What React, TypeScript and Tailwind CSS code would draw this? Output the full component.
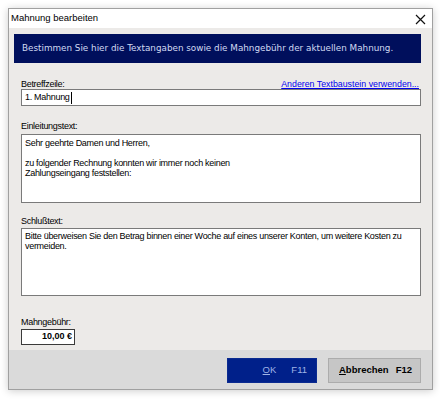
import React from "react";

const font = { fontFamily: '"Liberation Sans", Arial, sans-serif' };

function Label({ children }: { children: React.ReactNode }) {
  return <div className="h-[12px] text-[9px] leading-[12px] tracking-[-0.3px] text-black">{children}</div>;
}

export default function App() {
  return (
    <div className="w-[440px] h-[400px] bg-white pt-[8px] pl-[8px]" style={font}>
      <div className="w-[425px] h-[382px] flex flex-col border border-[#a0a0a0] shadow-[0_1px_8px_rgba(0,0,0,0.2)] bg-[#eceae8]">
        {/* title bar */}
        <div className="h-[19px] bg-white flex items-center justify-between pl-[2px] pr-[6px]">
          <span className="text-[9.5px] text-black">Mahnung bearbeiten</span>
          <svg width="11" height="11" viewBox="0 0 11 11" className="mt-[1px]">
            <path d="M1 1 L10 10 M10 1 L1 10" stroke="#111" strokeWidth="1.2" />
          </svg>
        </div>

        <div className="flex-1 flex flex-col pl-[5px]">
          {/* banner */}
          <div className="mt-[6px] w-[407px] h-[29px] bg-[#000f5c] flex items-center pl-[8px]">
            <span className="text-[#d2daf2]" style={{ fontFamily: '"DejaVu Sans", Verdana, sans-serif', fontSize: "8.8px" }}>
              Bestimmen Sie hier die Textangaben sowie die Mahngebühr der aktuellen Mahnung.
            </span>
          </div>

          <div className="pl-[7px] w-[407px] flex flex-col">
            {/* Betreffzeile */}
            <div className="mt-[15px] flex items-end justify-between w-[400px]">
              <Label>Betreffzeile:</Label>
              <a className="text-[8.8px] leading-[12px] text-[#0000ee] underline mr-[2px]">
                Anderen Textbaustein verwenden...
              </a>
            </div>
            <div className="mt-[-1px] w-[400px] h-[17px] bg-white border border-[#7a7a7a] flex items-center pl-[3px] text-[9px] tracking-[-0.3px]">
              1. Mahnung<span className="inline-block w-px h-[12px] bg-black ml-[1px]" />
            </div>

            {/* Einleitungstext */}
            <div className="mt-[14px]">
              <Label>Einleitungstext:</Label>
            </div>
            <div className="mt-[2px] w-[400px] h-[69px] bg-white border border-[#7a7a7a] px-[3px] pt-[3px] text-[9px] leading-[10px] tracking-[-0.3px]">
              <div>Sehr geehrte Damen und Herren,</div>
              <div className="h-[10px]" />
              <div>zu folgender Rechnung konnten wir immer noch keinen</div>
              <div>Zahlungseingang feststellen:</div>
            </div>

            {/* Schlußtext */}
            <div className="mt-[12px]">
              <Label>Schlußtext:</Label>
            </div>
            <div className="mt-[1px] w-[400px] h-[68px] bg-white border border-[#7a7a7a] px-[3px] pt-[2px] text-[9px] leading-[10px] tracking-[-0.3px]">
              <div className="whitespace-nowrap">Bitte überweisen Sie den Betrag binnen einer Woche auf eines unserer Konten, um weitere Kosten zu</div>
              <div>vermeiden.</div>
            </div>

            {/* Mahngebühr */}
            <div className="mt-[20px]">
              <Label>Mahngebühr:</Label>
            </div>
            <div className="mt-[1px] w-[54px] h-[16px] bg-white border border-[#3a3a3a] flex items-center justify-end pr-[2px] text-[9px] font-semibold">
              10,00 €
            </div>
          </div>
        </div>

        {/* footer */}
        <div className="h-[39px] bg-[#dadada] flex items-start justify-end gap-[11px] pt-[8px] pr-[11px]">
          <button className="w-[90px] h-[25px] bg-[#00208a] border border-[#0a2a90] flex items-center justify-end pr-[9px] gap-[15px] text-[9.5px] text-[#9fb3e6]">
            <span><span className="underline">O</span>K</span>
            <span>F11</span>
          </button>
          <button className="w-[93px] h-[25px] bg-[#c6c6c6] border border-[#acacac] flex items-center justify-end pr-[8px] gap-[7px] text-[9.5px] font-semibold text-black">
            <span><span className="underline">A</span>bbrechen</span>
            <span>F12</span>
          </button>
        </div>
      </div>
    </div>
  );
}
